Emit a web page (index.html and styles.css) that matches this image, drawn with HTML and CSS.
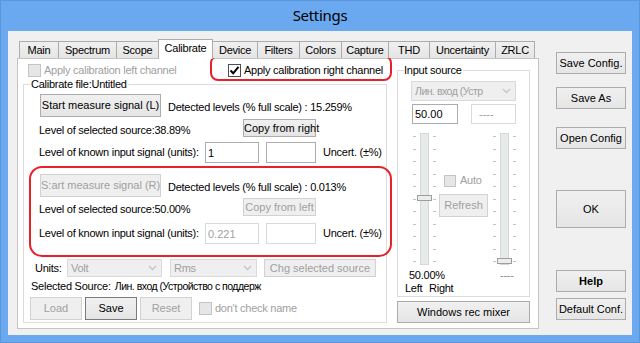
FILE: index.html
```html
<!DOCTYPE html>
<html lang="en">
<head>
	<meta charset="UTF-8">
	<title>Settings</title>
	<link rel="stylesheet" href="styles.css">
</head>
<body>
	<div class="window">
		<div class="titlebar">Settings</div>
		<div class="client">
			<div class="tabarea">
				<div class="tabs">
					<div class="tab t-main">Main</div>
					<div class="tab t-spec">Spectrum</div>
					<div class="tab t-scope">Scope</div>
					<div class="tab t-cal active">Calibrate</div>
					<div class="tab t-dev">Device</div>
					<div class="tab t-filt">Filters</div>
					<div class="tab t-col">Colors</div>
					<div class="tab t-cap">Capture</div>
					<div class="tab t-thd">THD</div>
					<div class="tab t-unc">Uncertainty</div>
					<div class="tab t-zrlc">ZRLC</div>
				</div>
				<div class="panel">
					<div class="leftcol">
						<div class="checkrow">
							<label class="chk first off"><span class="box dis"></span>Apply calibration left channel</label>
							<label class="chk"><span class="box on"><svg width="11" height="11" viewBox="0 0 11 11"><path d="M1.5 5.5 L4.2 8.3 L9.5 1.8" stroke="#000" stroke-width="2" fill="none"/></svg></span>Apply calibration right channel</label>
						</div>
						<fieldset class="group calib">
							<legend>Calibrate file:Untitled</legend>
							<div class="row ra">
								<button class="btn measure">Start measure signal (L)</button>
								<span class="det">Detected levels (% full scale) : 15.259%</span>
							</div>
							<div class="row rb">
								<span class="lvl">Level of selected source:38.89%</span>
								<button class="btn copy">Copy from right</button>
							</div>
							<div class="row rc">
								<span class="known">Level of known input signal (units):</span>
								<input class="edit val" type="text" value="1">
								<input class="edit unc" type="text" value="">
								<span class="uncert">Uncert. (±%)</span>
							</div>
							<div class="row rd">
								<button class="btn measure" disabled>S:art measure signal (R)</button>
								<span class="det">Detected levels (% full scale) : 0.013%</span>
							</div>
							<div class="row re">
								<span class="lvl">Level of selected source:50.00%</span>
								<button class="btn copy" disabled>Copy from left</button>
							</div>
							<div class="row rc rf">
								<span class="known">Level of known input signal (units):</span>
								<input class="edit val" type="text" value="0.221" disabled>
								<input class="edit unc" type="text" value="" disabled>
								<span class="uncert">Uncert. (±%)</span>
							</div>
							<div class="row rg">
								<span class="units">Units:</span>
								<div class="combo volt">Volt<svg width="9" height="6" viewBox="0 0 9 6"><path d="M1 1 L4.5 4.5 L8 1" stroke="#c6c6c6" stroke-width="1.4" fill="none"/></svg></div>
								<div class="combo rms">Rms<svg width="9" height="6" viewBox="0 0 9 6"><path d="M1 1 L4.5 4.5 L8 1" stroke="#c6c6c6" stroke-width="1.4" fill="none"/></svg></div>
								<button class="btn chg" disabled>Chg selected source</button>
							</div>
							<div class="row rh"><span>Selected Source:</span><span class="cyr sel">Лин. вход (Устройство с поддерж</span></div>
							<div class="row ri">
								<button class="btn small" disabled>Load</button>
								<button class="btn small def">Save</button>
								<button class="btn small" disabled>Reset</button>
								<label class="chk off nocheck"><span class="box dis"></span>don't check name</label>
							</div>
						</fieldset>
					</div>
					<div class="rightcol">
						<fieldset class="group source">
							<legend>Input source</legend>
							<div class="combo src"><span class="cyr">Лин. вход (Устр</span><svg width="9" height="6" viewBox="0 0 9 6"><path d="M1 1 L4.5 4.5 L8 1" stroke="#c6c6c6" stroke-width="1.4" fill="none"/></svg></div>
							<div class="pair">
								<input class="edit lvlin" type="text" value="50.00">
								<input class="edit lvlr" type="text" value="----" disabled>
							</div>
							<div class="sliders">
								<div class="slider">
									<div class="ticks"></div>
									<div class="track"><div class="thumb t-left"></div></div>
									<div class="ticks"></div>
								</div>
								<div class="mid">
									<label class="chk off auto"><span class="box dis small-box"></span>Auto</label>
									<button class="btn refresh" disabled>Refresh</button>
								</div>
								<div class="slider right">
									<div class="ticks"></div>
									<div class="track"><div class="thumb t-right"></div></div>
									<div class="ticks"></div>
								</div>
							</div>
							<div class="pct">
								<span class="p1">50.00%</span>
								<span class="p2">----</span>
							</div>
							<div class="lr">
								<span class="l1">Left</span>
								<span>Right</span>
							</div>
						</fieldset>
						<button class="btn mixer">Windows rec mixer</button>
					</div>
				</div>
			</div>
			<div class="side">
				<button class="btn sb s1">Save Config.</button>
				<button class="btn sb s2">Save As</button>
				<button class="btn sb s3">Open Config</button>
				<button class="btn sb ok">OK</button>
				<button class="btn sb help">Help</button>
				<button class="btn sb s6">Default Conf.</button>
			</div>
		</div>
		<div class="mark mark1"></div>
		<div class="mark mark2"></div>
	</div>
</body>
</html>
```

FILE: styles.css
```css
*{
	margin: 0;
	padding: 0;
	box-sizing: border-box;
}
body{
	font: 11px/13px "Liberation Sans", Arial, sans-serif;
	letter-spacing: -0.25px;
	color: #000;
	background: #6aa9ef;
}
.window{
	width: 640px;
	height: 343px;
	background: #6aa9ef;
	border: 1px solid #5b95da;
	position: relative;
}
.titlebar{
	height: 30px;
	padding-top: 4px;
	text-align: center;
	font: 15px/20px "Noto Sans", sans-serif;
	letter-spacing: -0.3px;
	color: #000;
}
.client{
	margin-left: 7px;
	width: 624px;
	height: 304px;
	background: #f0f0f0;
	display: flex;
	padding: 8px 0 0 9px;
}
.tabarea{
	width: 522px;
	display: flex;
	flex-direction: column;
}
.tabs{
	display: flex;
	align-items: flex-end;
	height: 20px;
	margin-left: 3px;
	margin-bottom: -1px;
	position: relative;
	z-index: 1;
}
.tab{
	height: 17px;
	margin-bottom: 1px;
	margin-left: -1px;
	padding-top: 2px;
	border: 1px solid #acacac;
	border-bottom: none;
	background: linear-gradient(#f0f0f0, #e5e5e5);
	text-align: center;
	white-space: nowrap;
}
.tab.active{
	height: 20px;
	margin-bottom: 0;
	background: #fff;
}
.t-main{ width: 40px; }
.t-spec{ width: 59px; }
.t-scope{ width: 43px; }
.t-cal{ width: 55px; }
.t-dev{ width: 46px; }
.t-filt{ width: 43px; }
.t-col{ width: 43px; }
.t-cap{ width: 48px; }
.t-thd{ width: 42px; }
.t-unc{ width: 67px; }
.t-zrlc{ width: 40px; }
.panel{
	height: 271px;
	border: 1px solid #c4c4c4;
	background: #fff;
	display: flex;
}
.leftcol{
	margin-left: 5px;
	width: 364px;
	padding-top: 3px;
}
.checkrow{
	display: flex;
	height: 16px;
	padding-left: 5px;
}
.chk{
	display: flex;
	align-items: center;
	gap: 3px;
	white-space: nowrap;
}
.chk.first{
	width: 200px;
}
.off{
	color: #a0a0a0;
}
.box{
	width: 13px;
	height: 13px;
	flex: none;
	display: flex;
	align-items: center;
	justify-content: center;
}
.box.dis{
	border: 1px solid #c4c4c4;
	background: #e6e6e6;
}
.box.on{
	border: 1px solid #4d4d4d;
	background: #fff;
}
.group{
	border: 1px solid #dcdcdc;
	margin: 0;
	min-width: 0;
	font: inherit;
}
.group legend{
	padding: 0 1px;
	line-height: 13px;
	white-space: nowrap;
}
.calib{
	padding: 3px 0 2px 15px;
}
.calib legend{
	margin-left: -9px;
}
.row{
	display: flex;
	align-items: flex-start;
	white-space: nowrap;
}
.btn{
	font: inherit;
	color: #000;
	border: 1px solid #acacac;
	background: linear-gradient(#f0f0f0, #e5e5e5);
	white-space: nowrap;
	padding: 0;
}
.btn:disabled{
	color: #a0a0a0;
	border-color: #d2d2d2;
	background: #efefef;
}
.btn.def{
	border-color: #7a7a7a;
}
.measure{
	width: 121px;
	height: 23px;
	margin-left: 1px;
}
.det{
	margin: 7px 0 0 7px;
}
.rb{
	margin-top: 2px;
}
.lvl{
	flex: none;
	width: 204px;
	margin-top: 5px;
}
.copy{
	width: 73px;
	height: 18px;
}
.rc{
	margin-top: 5px;
	height: 21px;
	align-items: center;
}
.known{
	flex: none;
	width: 166px;
}
.edit{
	font: inherit;
	color: #000;
	height: 21px;
	border: 1px solid #abadb3;
	background: #fff;
	padding: 0 2px;
	outline: none;
}
.edit:disabled{
	color: #a0a0a0;
	border-color: #d9d9d9;
	background: #fff;
}
.val{
	width: 54px;
}
.unc{
	width: 50px;
	margin-left: 7px;
}
.uncert{
	margin-left: 7px;
}
.rd{
	margin-top: 11px;
}
.re{
	margin-top: 1px;
}
.rf{
	margin-top: 7px;
}
.rg{
	margin-top: 15px;
	height: 18px;
	align-items: center;
}
.units{
	width: 32px;
	margin-left: -4px;
}
.combo{
	height: 18px;
	border: 1px solid #d9d9d9;
	background: #efefef;
	color: #a0a0a0;
	display: flex;
	align-items: center;
	justify-content: space-between;
	padding: 0 4px 0 3px;
	overflow: hidden;
	white-space: nowrap;
}
.combo svg{
	flex: none;
}
.volt{
	width: 95px;
}
.rms{
	width: 87px;
	margin-left: 8px;
}
.chg{
	width: 112px;
	height: 18px;
	margin-left: 7px;
}
.rh{
	margin-top: 3px;
	margin-left: -8px;
	align-items: baseline;
}
.cyr{
	font-size: 10.5px;
	letter-spacing: -0.5px;
}
.cyr.sel{
	margin-left: 4px;
}
.ri{
	margin-top: 4px;
	margin-left: -9px;
	align-items: center;
}
.small{
	width: 52px;
	height: 23px;
	margin-right: 3px;
}
.nocheck{
	margin-left: 4px;
}
.rightcol{
	margin-left: 10px;
	width: 133px;
	padding-top: 5px;
}
.source{
	padding: 4px 0 1px 13px;
}
.source legend{
	margin-left: -8px;
}
.combo.src{
	width: 105px;
	height: 20px;
}
.combo.src svg{
	margin-left: 3px;
}
.pair{
	display: flex;
	margin-top: 3px;
}
.lvlin{
	width: 46px;
	height: 20px;
	margin-left: 1px;
}
.lvlr{
	width: 45px;
	height: 20px;
	margin-left: 13px;
	padding-left: 7px;
}
.sliders{
	display: flex;
	height: 132px;
	margin-top: 9px;
	margin-left: 2px;
}
.slider{
	display: flex;
	gap: 4px;
}
.slider.right{
	margin-left: 5px;
}
.ticks{
	width: 3px;
	height: 127px;
	margin-top: 3px;
	background: repeating-linear-gradient(to bottom, #c3c3c3 0 1px, transparent 1px 12.5px);
}
.track{
	width: 9px;
	height: 132px;
	border: 1px solid #d6d6d6;
	background: #e7eaea;
	position: relative;
}
.thumb{
	position: absolute;
	left: -4px;
	width: 15px;
	height: 6px;
	border: 1px solid #9d9d9d;
	background: #ececec;
}
.t-left{
	top: 61px;
}
.t-right{
	top: 124px;
}
.mid{
	width: 49px;
	margin-left: 3px;
}
.auto{
	margin: 41px 0 0 5px;
	gap: 4px;
}
.small-box{
	width: 12px;
	height: 12px;
}
.refresh{
	width: 49px;
	height: 23px;
	margin-top: 7px;
}
.pct{
	display: flex;
	margin-top: 4px;
}
.p1{
	width: 91px;
	margin-left: -2px;
}
.p2{
	color: #8a8a8a;
}
.lr{
	display: flex;
	margin-left: -6px;
}
.l1{
	width: 24px;
}
.mixer{
	width: 133px;
	height: 22px;
	margin-top: 4px;
}
.side{
	margin-left: 17px;
	width: 70px;
	display: flex;
	flex-direction: column;
}
.sb{
	height: 22px;
}
.s1{ margin-top: 13px; }
.s2{ margin-top: 13px; }
.s3{ margin-top: 18px; }
.ok{
	height: 38px;
	margin-top: 41px;
}
.help{
	margin-top: 42px;
	font-weight: bold;
}
.s6{
	margin-top: 6px;
}
.mark{
	position: absolute;
	border: 2px solid #e8202a;
}
.mark1{
	left: 209px;
	top: 54px;
	width: 182px;
	height: 26px;
	border-radius: 8px;
}
.mark2{
	left: 28px;
	top: 165px;
	width: 363px;
	height: 91px;
	border-radius: 13px;
}
```
